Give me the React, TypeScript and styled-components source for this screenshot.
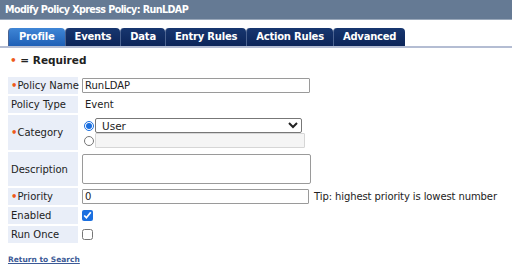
import { createGlobalStyle, styled } from "styled-components";

const Global = createGlobalStyle`
  html, body { margin: 0; padding: 0; background: #fff; }
  body { font-family: "DejaVu Sans", Verdana, sans-serif; font-size: 10px; color: #222; }
`;

const TitleBar = styled.div`
  height: 19px;
  background: #657a94;
  border-bottom: 1px solid #9aa8ba;
  color: #fff;
  font-weight: bold;
  font-size: 9.6px;
  letter-spacing: -0.6px;
  line-height: 19px;
  padding-left: 5px;
`;

const TabRow = styled.div`
  display: flex;
  margin-top: 8px;
  padding-left: 8px;
  border-bottom: 2px solid #b4bdd3;
`;

const Tab = styled.div<{ $active?: boolean }>`
  height: 18px;
  line-height: 18px;
  padding: 0 ${(p) => (p.$active ? 10 : 9)}px;
  color: #fff;
  font-weight: bold;
  font-size: 10px;
  letter-spacing: -0.22px;
  border-radius: 4px 4px 0 0;
  border-left: 1px solid #4a6290;
  background: ${(p) =>
    p.$active
      ? "linear-gradient(#3f86d6, #1e5fb6)"
      : "linear-gradient(#17366f, #0c2559)"};
`;

const Required = styled.div`
  margin: 6px 0 0 10px;
  font-weight: bold;
  font-size: 10.5px;
`;

const Dot = styled.span`
  color: #ee5a1a;
  font-weight: bold;
`;

const Form = styled.div`
  margin: 11px 0 0 8px;
  display: grid;
  grid-template-columns: 70px 1fr;
  row-gap: 2px;
  column-gap: 4px;
`;

const Label = styled.div`
  background: #e9eef8;
  display: flex;
  align-items: center;
  padding-left: 3px;
  min-height: 17px;
  white-space: nowrap;
`;

const Field = styled.div<{ $pad?: number }>`
  display: flex;
  align-items: center;
  gap: 5px;
  min-height: 17px;
  padding-left: ${(p) => p.$pad ?? 0}px;
`;

const TextInput = styled.input<{ $w: number }>`
  box-sizing: border-box;
  width: ${(p) => p.$w}px;
  height: 15px;
  margin: 0;
  padding: 0 2px;
  border: 1px solid #9a9a9a;
  border-radius: 1px;
  font: inherit;
  color: #222;
  background: #fff;
  &:disabled { background: #f5f5f5; border-color: #d6d6d6; }
`;

const Area = styled.textarea`
  box-sizing: border-box;
  width: 229px;
  height: 30px;
  margin: 2px 0;
  border: 1px solid #9a9a9a;
  border-radius: 2px;
  resize: none;
`;

const CatStack = styled.div`
  display: flex;
  flex-direction: column;
  padding: 3px 0 2px 2px;
`;

const CatLine = styled.div`
  display: flex;
  align-items: center;
  gap: 1px;
`;

const Radio = styled.input`
  width: 10px;
  height: 10px;
  margin: 0;
  accent-color: #1a6fe0;
`;

const Select = styled.select`
  box-sizing: border-box;
  width: 207px;
  height: 15px;
  margin: 0;
  padding: 0 2px;
  border: 1px solid #777;
  border-radius: 2px;
  font: inherit;
  font-size: 10.5px;
  background: #fff;
  color: #222;
`;

const Check = styled.input`
  width: 11px;
  height: 11px;
  margin: 0;
  accent-color: #1a6fe0;
`;

const Tip = styled.span`
  font-size: 10px;
  letter-spacing: -0.1px;
`;

const BackLink = styled.a`
  display: inline-block;
  margin: 12px 0 0 8px;
  font-size: 7.5px;
  font-weight: bold;
  color: #3c5a96;
  text-decoration: underline;
`;

const Req = ({ children }: { children: string }) => (
  <Label>
    <Dot>•</Dot>
    {children}
  </Label>
);

export default function App() {
  return (
    <>
      <Global />
      <TitleBar>Modify Policy Xpress Policy: RunLDAP</TitleBar>
      <TabRow>
        <Tab $active>Profile</Tab>
        <Tab>Events</Tab>
        <Tab>Data</Tab>
        <Tab>Entry Rules</Tab>
        <Tab>Action Rules</Tab>
        <Tab>Advanced</Tab>
      </TabRow>
      <Required>
        <Dot>•</Dot> = Required
      </Required>
      <Form>
        <Req>Policy Name</Req>
        <Field>
          <TextInput $w={228} defaultValue="RunLDAP" />
        </Field>

        <Label>Policy Type</Label>
        <Field $pad={3}>Event</Field>

        <Req>Category</Req>
        <CatStack>
          <CatLine>
            <Radio type="radio" name="cat" defaultChecked />
            <Select defaultValue="User">
              <option>User</option>
            </Select>
          </CatLine>
          <CatLine>
            <Radio type="radio" name="cat" />
            <TextInput $w={210} disabled />
          </CatLine>
        </CatStack>

        <Label>Description</Label>
        <Field>
          <Area />
        </Field>

        <Req>Priority</Req>
        <Field>
          <TextInput $w={227} defaultValue="0" />
          <Tip>Tip: highest priority is lowest number</Tip>
        </Field>

        <Label>Enabled</Label>
        <Field>
          <Check type="checkbox" defaultChecked />
        </Field>

        <Label>Run Once</Label>
        <Field>
          <Check type="checkbox" />
        </Field>
      </Form>
      <BackLink href="#">Return to Search</BackLink>
    </>
  );
}
